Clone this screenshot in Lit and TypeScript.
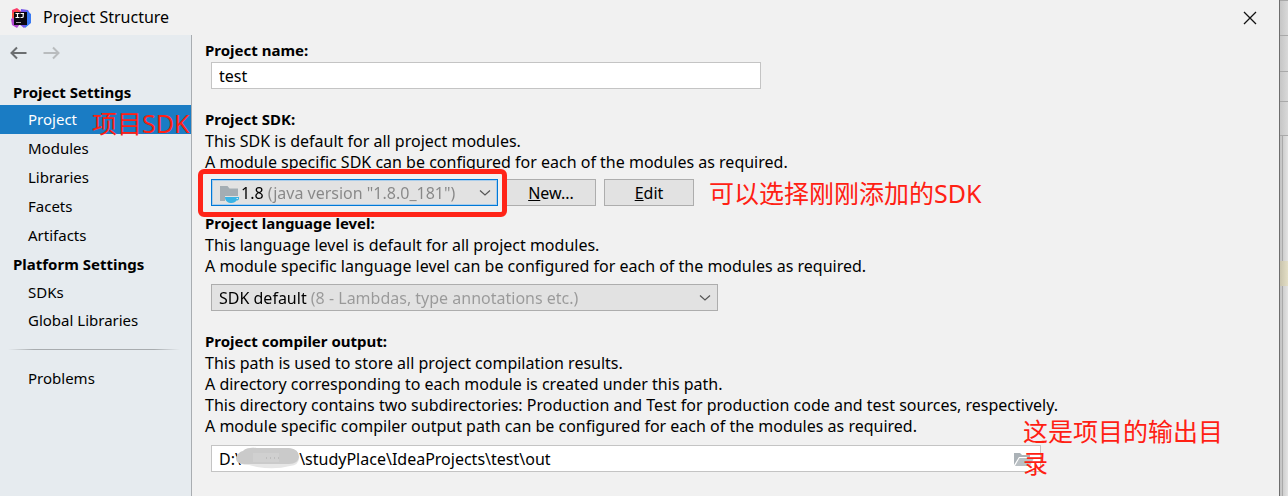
import { LitElement, html, css } from "lit";
import { customElement, property, state } from "lit/decorators.js";

const NBSP = "\u00a0";

@customElement("settings-nav")
class SettingsNav extends LitElement {
  @property() selected = "Project";

  private groups = [
    { title: "Project Settings", items: ["Project", "Modules", "Libraries", "Facets", "Artifacts"] },
    { title: "Platform Settings", items: ["SDKs", "Global Libraries"] },
  ];

  static styles = css`
    :host {
      display: flex;
      flex-direction: column;
      box-sizing: border-box;
      width: 192px;
      flex: none;
      font-size: 15px;
      background: #e6ebef;
      border-right: 1px solid #a9adb1;
    }
    .history {
      display: flex;
      gap: 16px;
      padding: 10px 10px 18px;
    }
    .history button {
      display: block;
      width: 17px;
      height: 16px;
      padding: 0;
      border: 0;
      background: none;
      color: #6b6e70;
    }
    .history button:disabled {
      color: #b9bcbe;
    }
    .history svg {
      display: block;
    }
    h2 {
      margin: 0;
      padding-left: 13px;
      font-size: 15px;
      line-height: 28px;
      font-weight: 700;
    }
    h2.first {
      line-height: 26px;
    }
    ul {
      margin: 0;
      padding: 0;
      list-style: none;
    }
    .item {
      position: relative;
    }
    a {
      display: block;
      padding-left: 28px;
      line-height: 29px;
      color: inherit;
      text-decoration: none;
    }
    .second a {
      line-height: 28px;
    }
    a.selected {
      background: #1a7cc4;
      color: #fff;
    }
    hr {
      width: 172px;
      height: 1px;
      margin: 15px 0 14px 8px;
      border: 0;
      background: linear-gradient(to right, transparent, #a8acaf 15%, #a8acaf 85%, transparent);
    }
    .note {
      position: absolute;
      left: 92px;
      top: 0;
      font-size: 25px;
      line-height: 36px;
      color: #ff2013;
      white-space: nowrap;
      pointer-events: none;
    }
  `;

  private link(name: string) {
    return html`<a
      href="#${name}"
      class=${name === this.selected ? "selected" : ""}
      @click=${() => (this.selected = name)}
      >${name}</a
    >`;
  }

  render() {
    return html`
      <div class="history">
        <button aria-label="Back">
          <svg width="17" height="16" viewBox="0 0 17 16" fill="none" stroke="currentColor" stroke-width="2">
            <path d="M16.500 8H1.500M7 2.500L1.500 8L7 13.500" />
          </svg>
        </button>
        <button aria-label="Forward" disabled>
          <svg width="17" height="16" viewBox="0 0 17 16" fill="none" stroke="currentColor" stroke-width="2">
            <path d="M.5 8H15.500M10 2.500L15.500 8L10 13.500" />
          </svg>
        </button>
      </div>
      ${this.groups.map(
        (group, index) => html`
          <h2 class=${index === 0 ? "first" : ""}>${group.title}</h2>
          <ul class=${index === 0 ? "" : "second"}>
            ${group.items.map(
              (name) => html`<li class="item">
                ${this.link(name)}${name === "Project" ? html`<span class="note">项目SDK</span>` : ""}
              </li>`
            )}
          </ul>
        `
      )}
      <hr />
      ${this.link("Problems")}
    `;
  }
}

@customElement("combo-box")
class ComboBox extends LitElement {
  @property() label = "";
  @property() name = "";
  @property() detail = "";
  @property({ type: Boolean, reflect: true }) focused = false;
  @property({ type: Boolean, reflect: true }) icon = false;

  static styles = css`
    :host {
      --split: 89px;
      --detail: #999;
      display: grid;
      position: relative;
      box-sizing: border-box;
      height: 27px;
      border: 1px solid #adadad;
      background: #e2e2e2;
    }
    :host([focused]) {
      --split: 25px;
      --detail: #878787;
      border-color: #0078d7;
      box-shadow: inset 0 0 0 1px #a9cdeb;
    }
    select {
      appearance: none;
      width: 100%;
      margin: 0;
      padding: 1px 24px 0 7px;
      border: 0;
      outline: 0;
      border-radius: 0;
      font: inherit;
      background: linear-gradient(to right, #000 var(--split), var(--detail) var(--split)) content-box;
      -webkit-background-clip: text;
      background-clip: text;
      background-origin: content-box;
      color: transparent;
    }
    :host([icon]) select {
      padding-left: 29px;
    }
    option {
      color: #000;
    }
    svg {
      position: absolute;
      pointer-events: none;
    }
    .arrow {
      right: 6px;
      top: 9px;
    }
    .folder {
      left: 8px;
      top: 5px;
    }
  `;

  render() {
    return html`
      <select aria-label=${this.label}>
        <option>${this.name} ${this.detail}</option>
      </select>
      ${this.icon
        ? html`<svg class="folder" width="20" height="19" viewBox="0 0 20 19">
            <path d="M0 1h7.500l2 2.500H18V11H5v5H0z" fill="#a4adb3" />
            <path d="M5 12h14v1.500c0 1.500-1 2-2.500 2C15.500 17 14 18 11.500 18 8 18 5 16 5 12z" fill="#3bb4e5" />
            <path d="M16.500 13h1.500v1h-1.500z" fill="#d8eaf2" />
          </svg>`
        : ""}
      <svg class="arrow" width="12" height="8" viewBox="0 0 12 8" fill="none" stroke="#555" stroke-width="1.200">
        <path d="M1 1.500L6 6L11 1.500" />
      </svg>
    `;
  }
}

@customElement("app-root")
class AppRoot extends LitElement {
  @state() private projectName = "test";

  static styles = css`
    :host {
      display: flex;
      min-height: 100vh;
      font-family: "Noto Sans", "Noto Sans CJK SC", sans-serif;
      font-size: 16px;
      line-height: 21px;
      color: #000;
      background: #e0e0e0;
    }
    .dialog {
      flex: 1;
      min-width: 0;
      display: flex;
      flex-direction: column;
      background: #f1f1f1;
      border-right: 1px solid #6d6d6d;
    }
    .titlebar {
      display: flex;
      align-items: center;
      height: 35px;
      padding: 0 22px 0 11px;
      gap: 12px;
    }
    .titlebar svg {
      display: block;
    }
    h1 {
      flex: 1;
      margin: 0;
      font-size: 16px;
      line-height: 23px;
      font-weight: 400;
    }
    .close {
      padding: 0;
      border: 0;
      background: none;
    }
    .body {
      flex: 1;
      display: flex;
    }
    main {
      flex: 1;
      min-width: 0;
      padding: 5px 13px 0;
    }
    section {
      display: grid;
    }
    .heading {
      margin: 0 0 1px;
      font-size: 15px;
      line-height: 21px;
      font-weight: 700;
    }
    p {
      margin: 0;
    }
    .controls {
      display: flex;
      gap: 8px;
      margin: 6px 0 6px 6px;
    }
    .language {
      margin: 7px 0 20px 6px;
      max-width: 507px;
    }
    .field {
      position: relative;
      display: grid;
      margin-left: 6px;
    }
    .name {
      max-width: 550px;
      margin-bottom: 20px;
    }
    .output {
      max-width: 830px;
      margin-top: 8px;
    }
    input {
      box-sizing: border-box;
      width: 100%;
      height: 27px;
      padding: 0 7px;
      border: 1px solid #c4c4c4;
      outline: 0;
      font: inherit;
      color: #000;
      background: #fff;
    }
    .sdk {
      position: relative;
      width: 287px;
    }
    .highlight {
      position: absolute;
      inset: -10px -9px -10px -13px;
      border: 5px solid #ff2418;
      border-radius: 6px;
      pointer-events: none;
    }
    .push {
      width: 90px;
      height: 27px;
      padding: 1px 0 0;
      border: 1px solid #adadad;
      font: inherit;
      color: #000;
      background: #e2e2e2;
    }
    .note {
      font-size: 25px;
      color: #ff2013;
    }
    .beside {
      padding-left: 7px;
      line-height: 28px;
      white-space: nowrap;
    }
    .over {
      position: absolute;
      left: 812px;
      top: -30px;
      width: 205px;
      line-height: 32px;
      pointer-events: none;
    }
    .smudge {
      position: absolute;
      left: 24px;
      top: 2px;
    }
    .browse {
      position: absolute;
      right: 7px;
      top: 7px;
      padding: 0;
      border: 0;
      background: none;
    }
    .browse svg,
    .close svg {
      display: block;
    }
    .behind {
      width: 8px;
      display: flex;
      flex-direction: column;
      background: linear-gradient(to right, #c2c2c2, #e4e4e4);
    }
    .toolbar {
      box-sizing: border-box;
      height: 36px;
      border-top: 1px solid #a9a9a9;
      background: linear-gradient(to right, #c6c6c6, #d9d9d9);
    }
    .toolbar.top {
      height: 35px;
    }
    .toolbar.short {
      height: 30px;
    }
    .toolbar.tall {
      height: 35px;
      border-bottom: 1px solid #a9a9a9;
    }
    .editor {
      flex: 1;
      margin-left: 2px;
      padding-top: 125px;
      border-left: 1px solid #a9a9a9;
    }
    .mark {
      height: 25px;
      margin-left: -3px;
      background: linear-gradient(to right, #c9c4ad, #e4dfc6);
    }
  `;

  private logo() {
    return html`<svg width="20" height="20" viewBox="0 0 20 20" aria-hidden="true">
      <path d="M1 2L6 0l7 6-8 6-4-2z" fill="#fb3a68" />
      <path d="M0 11l5-3 4 8-3 4-5-3z" fill="#b24ad0" />
      <path d="M1 6l5-4 4 6-6 6z" fill="#f5602f" />
      <path d="M10 1l7 1 2 4v9l-6 5-5-4z" fill="#7655e8" />
      <path d="M15 2l5 4v9l-6 5z" fill="#3979f3" />
      <rect x="3" y="4" width="13" height="13" fill="#0a0710" />
      <path d="M4.500 5.500h4M6.500 5v5M4.500 9.500h4M9.500 5.500h3.500M12.200 5v3.500q0 1-1.200 1h-1.500" fill="none" stroke="#fff" stroke-width="1.200" />
      <path d="M5 14.500h5" stroke="#aaa" />
    </svg>`;
  }

  render() {
    return html`
      <div class="dialog">
        <header class="titlebar">
          ${this.logo()}
          <h1>Project Structure</h1>
          <button class="close" aria-label="Close">
            <svg width="14" height="14" viewBox="0 0 14 14" stroke="#111" stroke-width="1.300">
              <path d="M1 1L13 13M13 1L1 13" />
            </svg>
          </button>
        </header>
        <div class="body">
          <settings-nav></settings-nav>
          <main>
            <section>
              <label class="heading" for="project-name">Project name:</label>
              <div class="field name">
                <input
                  id="project-name"
                  .value=${this.projectName}
                  @input=${(e: Event) => (this.projectName = (e.target as HTMLInputElement).value)}
                />
              </div>
            </section>
            <section>
              <h2 class="heading">Project SDK:</h2>
              <p>This SDK is default for all project modules.</p>
              <p>A module specific SDK can be configured for each of the modules as required.</p>
              <div class="controls">
                <div class="sdk">
                  <combo-box
                    label="Project SDK"
                    name="1.8"
                    detail='(java version "1.8.0_181")'
                    focused
                    icon
                  ></combo-box>
                  <span class="highlight"></span>
                </div>
                <button class="push"><u>N</u>ew...</button>
                <button class="push"><u>E</u>dit</button>
                <span class="note beside">可以选择刚刚添加的SDK</span>
              </div>
            </section>
            <section>
              <h2 class="heading">Project language level:</h2>
              <p>This language level is default for all project modules.</p>
              <p>A module specific language level can be configured for each of the modules as required.</p>
              <combo-box
                class="language"
                label="Project language level"
                name="SDK default"
                detail="(8 - Lambdas, type annotations etc.)"
              ></combo-box>
            </section>
            <section>
              <label class="heading" for="output">Project compiler output:</label>
              <p>This path is used to store all project compilation results.</p>
              <p>A directory corresponding to each module is created under this path.</p>
              <p>
                This directory contains two subdirectories: Production and Test for production code and test sources,
                respectively.
              </p>
              <p>A module specific compiler output path can be configured for each of the modules as required.</p>
              <div class="field output">
                <input id="output" .value=${"D:\\" + NBSP.repeat(14) + "\\studyPlace\\IdeaProjects\\test\\out"} />
                <svg class="smudge" width="66" height="22" viewBox="0 0 66 22" aria-hidden="true">
                  <path d="M1 12Q2 6 8 4Q12 0 22 1H54Q64 2 64 11Q64 18 55 19Q40 23 22 20L14 18Q3 18 1 12z" fill="#e6e6e6" />
                  <path d="M1 11Q3 5 8 4Q12 0 22 1H54Q64 2 64 10Q63 17 54 17H10Q1 17 1 11z" fill="#cacaca" />
                  <path d="M18 6h26v9H18z" fill="#d0d0d0" />
                  <path d="M31 11h14" stroke="#aaa" stroke-dasharray="1 3" />
                </svg>
                <button class="browse" aria-label="Browse">
                  <svg width="20" height="15" viewBox="0 0 20 15">
                    <path d="M0 13V1h6l2 2h8v2H5z" fill="#abb2b7" />
                    <path d="M5.500 6H20l-4 8H1z" fill="#bac0c4" />
                  </svg>
                </button>
                <span class="note over">这是项目的输出目录</span>
              </div>
            </section>
          </main>
        </div>
      </div>
      <div class="behind" aria-hidden="true">
        <div class="toolbar top"></div>
        <div class="toolbar"></div>
        <div class="toolbar short"></div>
        <div class="toolbar tall"></div>
        <div class="editor"><div class="mark"></div></div>
      </div>
    `;
  }
}
